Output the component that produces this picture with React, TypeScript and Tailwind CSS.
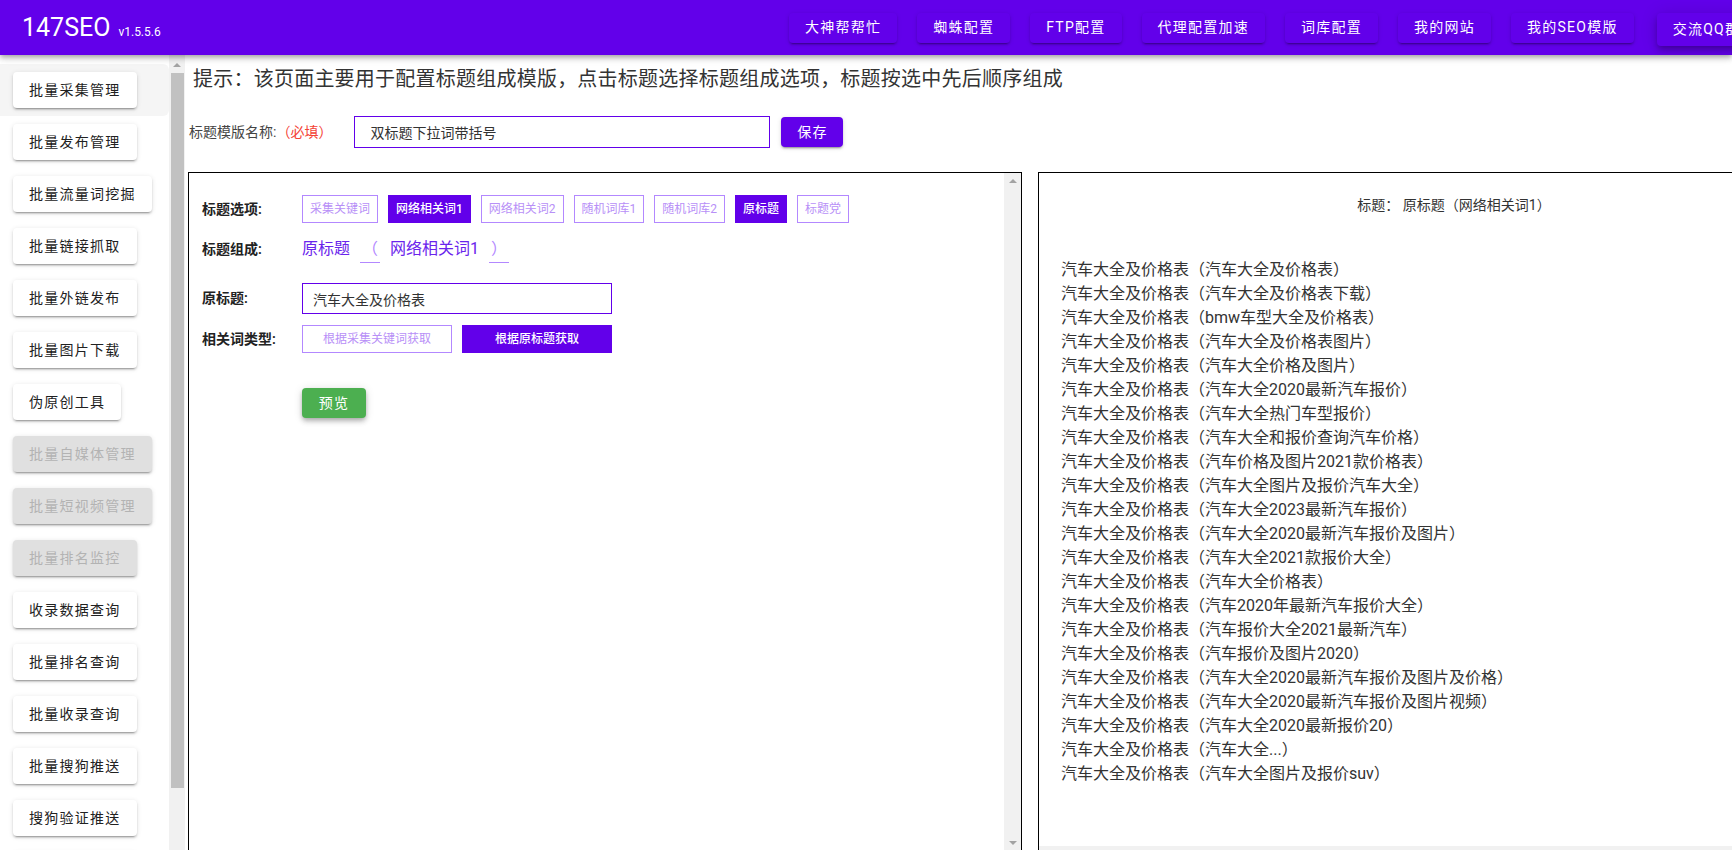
import React from 'react'

const navItems = ['大神帮帮忙', '蜘蛛配置', 'FTP配置', '代理配置加速', '词库配置', '我的网站', '我的SEO模版', '交流QQ群']

const sideItems = [
  { label: '批量采集管理', active: true },
  { label: '批量发布管理' },
  { label: '批量流量词挖掘' },
  { label: '批量链接抓取' },
  { label: '批量外链发布' },
  { label: '批量图片下载' },
  { label: '伪原创工具' },
  { label: '批量自媒体管理', disabled: true },
  { label: '批量短视频管理', disabled: true },
  { label: '批量排名监控', disabled: true },
  { label: '收录数据查询' },
  { label: '批量排名查询' },
  { label: '批量收录查询' },
  { label: '批量搜狗推送' },
  { label: '搜狗验证推送' },
  { label: '批量神马推送' },
]

const options = [
  { label: '采集关键词' },
  { label: '网络相关词1', on: true },
  { label: '网络相关词2' },
  { label: '随机词库1' },
  { label: '随机词库2' },
  { label: '原标题', on: true },
  { label: '标题党' },
]

const results = [
  '汽车大全及价格表',
  '汽车大全及价格表下载',
  'bmw车型大全及价格表',
  '汽车大全及价格表图片',
  '汽车大全价格及图片',
  '汽车大全2020最新汽车报价',
  '汽车大全热门车型报价',
  '汽车大全和报价查询汽车价格',
  '汽车价格及图片2021款价格表',
  '汽车大全图片及报价汽车大全',
  '汽车大全2023最新汽车报价',
  '汽车大全2020最新汽车报价及图片',
  '汽车大全2021款报价大全',
  '汽车大全价格表',
  '汽车2020年最新汽车报价大全',
  '汽车报价大全2021最新汽车',
  '汽车报价及图片2020',
  '汽车大全2020最新汽车报价及图片及价格',
  '汽车大全2020最新汽车报价及图片视频',
  '汽车大全2020最新报价20',
  '汽车大全...',
  '汽车大全图片及报价suv',
]

const elev =
  'shadow-[0_3px_1px_-2px_rgba(0,0,0,0.2),0_2px_2px_0_rgba(0,0,0,0.14),0_1px_5px_0_rgba(0,0,0,0.12)]'

function ArrowUp() {
  return <div className="w-0 h-0 border-x-[4px] border-x-transparent border-b-[4px] border-b-[#a3a3a3]" />
}

function ArrowDown() {
  return <div className="w-0 h-0 border-x-[4px] border-x-transparent border-t-[4px] border-t-[#a3a3a3]" />
}

export default function App() {
  return (
    <div className="h-screen overflow-hidden bg-white font-['Roboto','Noto_Sans_CJK_SC',sans-serif] text-[#333]">
      {/* Top bar */}
      <header className="relative z-10 h-[55px] bg-[#6200ea] flex items-center overflow-hidden shadow-[0_2px_4px_-1px_rgba(0,0,0,0.2),0_4px_5px_0_rgba(0,0,0,0.14),0_1px_10px_0_rgba(0,0,0,0.12)]">
        <div className="w-[789px] shrink-0 pl-[22px] flex items-baseline text-white">
          <span className="text-[25px] leading-none">147SEO</span>
          <span className="text-[12px] leading-none ml-[8px]">v1.5.5.6</span>
        </div>
        <nav className="flex items-center gap-[20px]">
          {navItems.map((item, i) => (
            <button
              key={item}
              className={`shrink-0 h-[30px] px-4 rounded-[4px] bg-[#6200ea] text-white text-[14px] tracking-[0.0892em] whitespace-nowrap ${
                i === navItems.length - 1
                  ? 'h-[33px] mt-[3px] ml-[3px] shadow-[0_3px_5px_-1px_rgba(0,0,0,0.2),0_6px_10px_0_rgba(0,0,0,0.14),0_1px_18px_0_rgba(0,0,0,0.12)]'
                  : elev
              }`}
            >
              {item}
            </button>
          ))}
        </nav>
      </header>

      <div className="flex h-[795px]">
        {/* Sidebar */}
        <aside className="flex shrink-0">
          <div className="w-[169px] pt-[9px]">
            {sideItems.map((item) => (
              <div
                key={item.label}
                className={`h-[52px] flex items-center pl-[13px] ${item.active ? 'bg-[#f5f5f5] rounded-r-[6px]' : ''}`}
              >
                <button
                  className={`h-[36px] px-4 rounded-[4px] text-[14px] tracking-[0.0892em] whitespace-nowrap ${elev} ${
                    item.disabled ? 'bg-[#e0e0e0] text-[#b3b3b3]' : 'bg-white text-[#212121]'
                  }`}
                >
                  {item.label}
                </button>
              </div>
            ))}
          </div>
          <div className="w-[16px] bg-[#f1f1f1] flex flex-col items-center pt-[8px]">
            <ArrowUp />
            <div className="mt-[6px] w-[13px] h-[715px] bg-[#c1c1c1]" />
          </div>
        </aside>

        {/* Main */}
        <main className="flex-1 min-w-0 pl-[3px] pt-[10px] flex flex-col">
          <p className="ml-[5px] text-[20px] leading-[28px] tracking-[0.23px] text-[#333] whitespace-nowrap">
            提示：该页面主要用于配置标题组成模版，点击标题选择标题组成选项，标题按选中先后顺序组成
          </p>

          <div className="mt-[23px] h-[32px] flex items-center">
            <span className="ml-[1px] text-[14px] text-[#444] whitespace-nowrap">
              标题模版名称:<span className="text-[#f44336]">（必填）</span>
            </span>
            <input
              readOnly
              value="双标题下拉词带括号"
              className="ml-[22px] w-[416px] h-[32px] border border-[#6200ea] pl-[15px] text-[14px] text-[#333] outline-none"
            />
            <button className={`ml-[11px] w-[62px] h-[30px] rounded-[4px] bg-[#6200ea] text-white text-[14px] tracking-[0.0892em] ${elev}`}>
              保存
            </button>
          </div>

          <div className="mt-[24px] flex items-start">
            {/* Left editor panel */}
            <section className="w-[834px] h-[680px] shrink-0 border border-black flex">
              <div className="flex-1 pl-[13px] pt-[22px]">
                <div className="h-[28px] flex items-center">
                  <span className="w-[100px] text-[14px] font-semibold text-[#222]">标题选项:</span>
                  <div className="flex gap-[10px]">
                    {options.map((o) => (
                      <span
                        key={o.label}
                        className={`h-[28px] px-[7px] flex items-center text-[12px] whitespace-nowrap border ${
                          o.on ? 'bg-[#6200ea] border-[#6200ea] text-white font-medium' : 'border-[#b388ff] text-[#b890f7]'
                        }`}
                      >
                        {o.label}
                      </span>
                    ))}
                  </div>
                </div>

                <div className="mt-[11px] h-[30px] flex items-center">
                  <span className="w-[100px] text-[14px] font-semibold text-[#222]">标题组成:</span>
                  <div className="flex items-center gap-[10px] text-[16px]">
                    <span className="text-[#6a24ec] leading-[28px]">原标题</span>
                    <span className="w-[20px] h-[28px] leading-[27px] text-center text-[#b388ff] border-b border-[#b388ff]">（</span>
                    <span className="text-[#6a24ec] leading-[28px]">网络相关词1</span>
                    <span className="w-[20px] h-[28px] leading-[27px] text-center text-[#b388ff] border-b border-[#b388ff]">）</span>
                  </div>
                </div>

                <div className="mt-[19px] h-[31px] flex items-center">
                  <span className="w-[100px] text-[14px] font-semibold text-[#222]">原标题:</span>
                  <input
                    readOnly
                    value="汽车大全及价格表"
                    className="w-[310px] h-[31px] border border-[#6200ea] px-[10px] text-[14px] text-[#333] outline-none"
                  />
                </div>

                <div className="mt-[11px] h-[28px] flex items-center">
                  <span className="w-[100px] text-[14px] font-semibold text-[#222]">相关词类型:</span>
                  <button className="w-[150px] h-[28px] border border-[#b388ff] text-[12px] text-[#b890f7]">
                    根据采集关键词获取
                  </button>
                  <button className="ml-[10px] w-[150px] h-[28px] bg-[#6200ea] text-[12px] font-medium text-white">
                    根据原标题获取
                  </button>
                </div>

                <div className="mt-[35px] pl-[100px]">
                  <button className="w-[64px] h-[30px] rounded-[4px] bg-[#4caf50] text-white text-[14px] tracking-[0.0892em] shadow-[0_2px_4px_-1px_rgba(0,0,0,0.2),0_4px_5px_0_rgba(0,0,0,0.14),0_1px_10px_0_rgba(0,0,0,0.12)]">
                    预览
                  </button>
                </div>
              </div>
              <div className="w-[17px] bg-[#f1f1f1] flex flex-col items-center justify-between py-[6px]">
                <ArrowUp />
                <ArrowDown />
              </div>
            </section>

            {/* Right preview panel */}
            <section className="ml-[16px] w-[832px] h-[690px] shrink-0 border border-black flex flex-col">
              <div className="flex-1 pt-[22px]">
                <p className="text-center text-[14px] leading-[20px] text-[#333]">标题： 原标题（网络相关词1）</p>
                <ul className="mt-[43px] pl-[22px]">
                  {results.map((r, i) => (
                    <li key={i} className="text-[16px] leading-[24px] text-[#333] whitespace-nowrap">
                      汽车大全及价格表（{r}）
                    </li>
                  ))}
                </ul>
              </div>
              <div className="h-[15px] bg-[#f1f1f1]" />
            </section>
          </div>
        </main>
      </div>
    </div>
  )
}
